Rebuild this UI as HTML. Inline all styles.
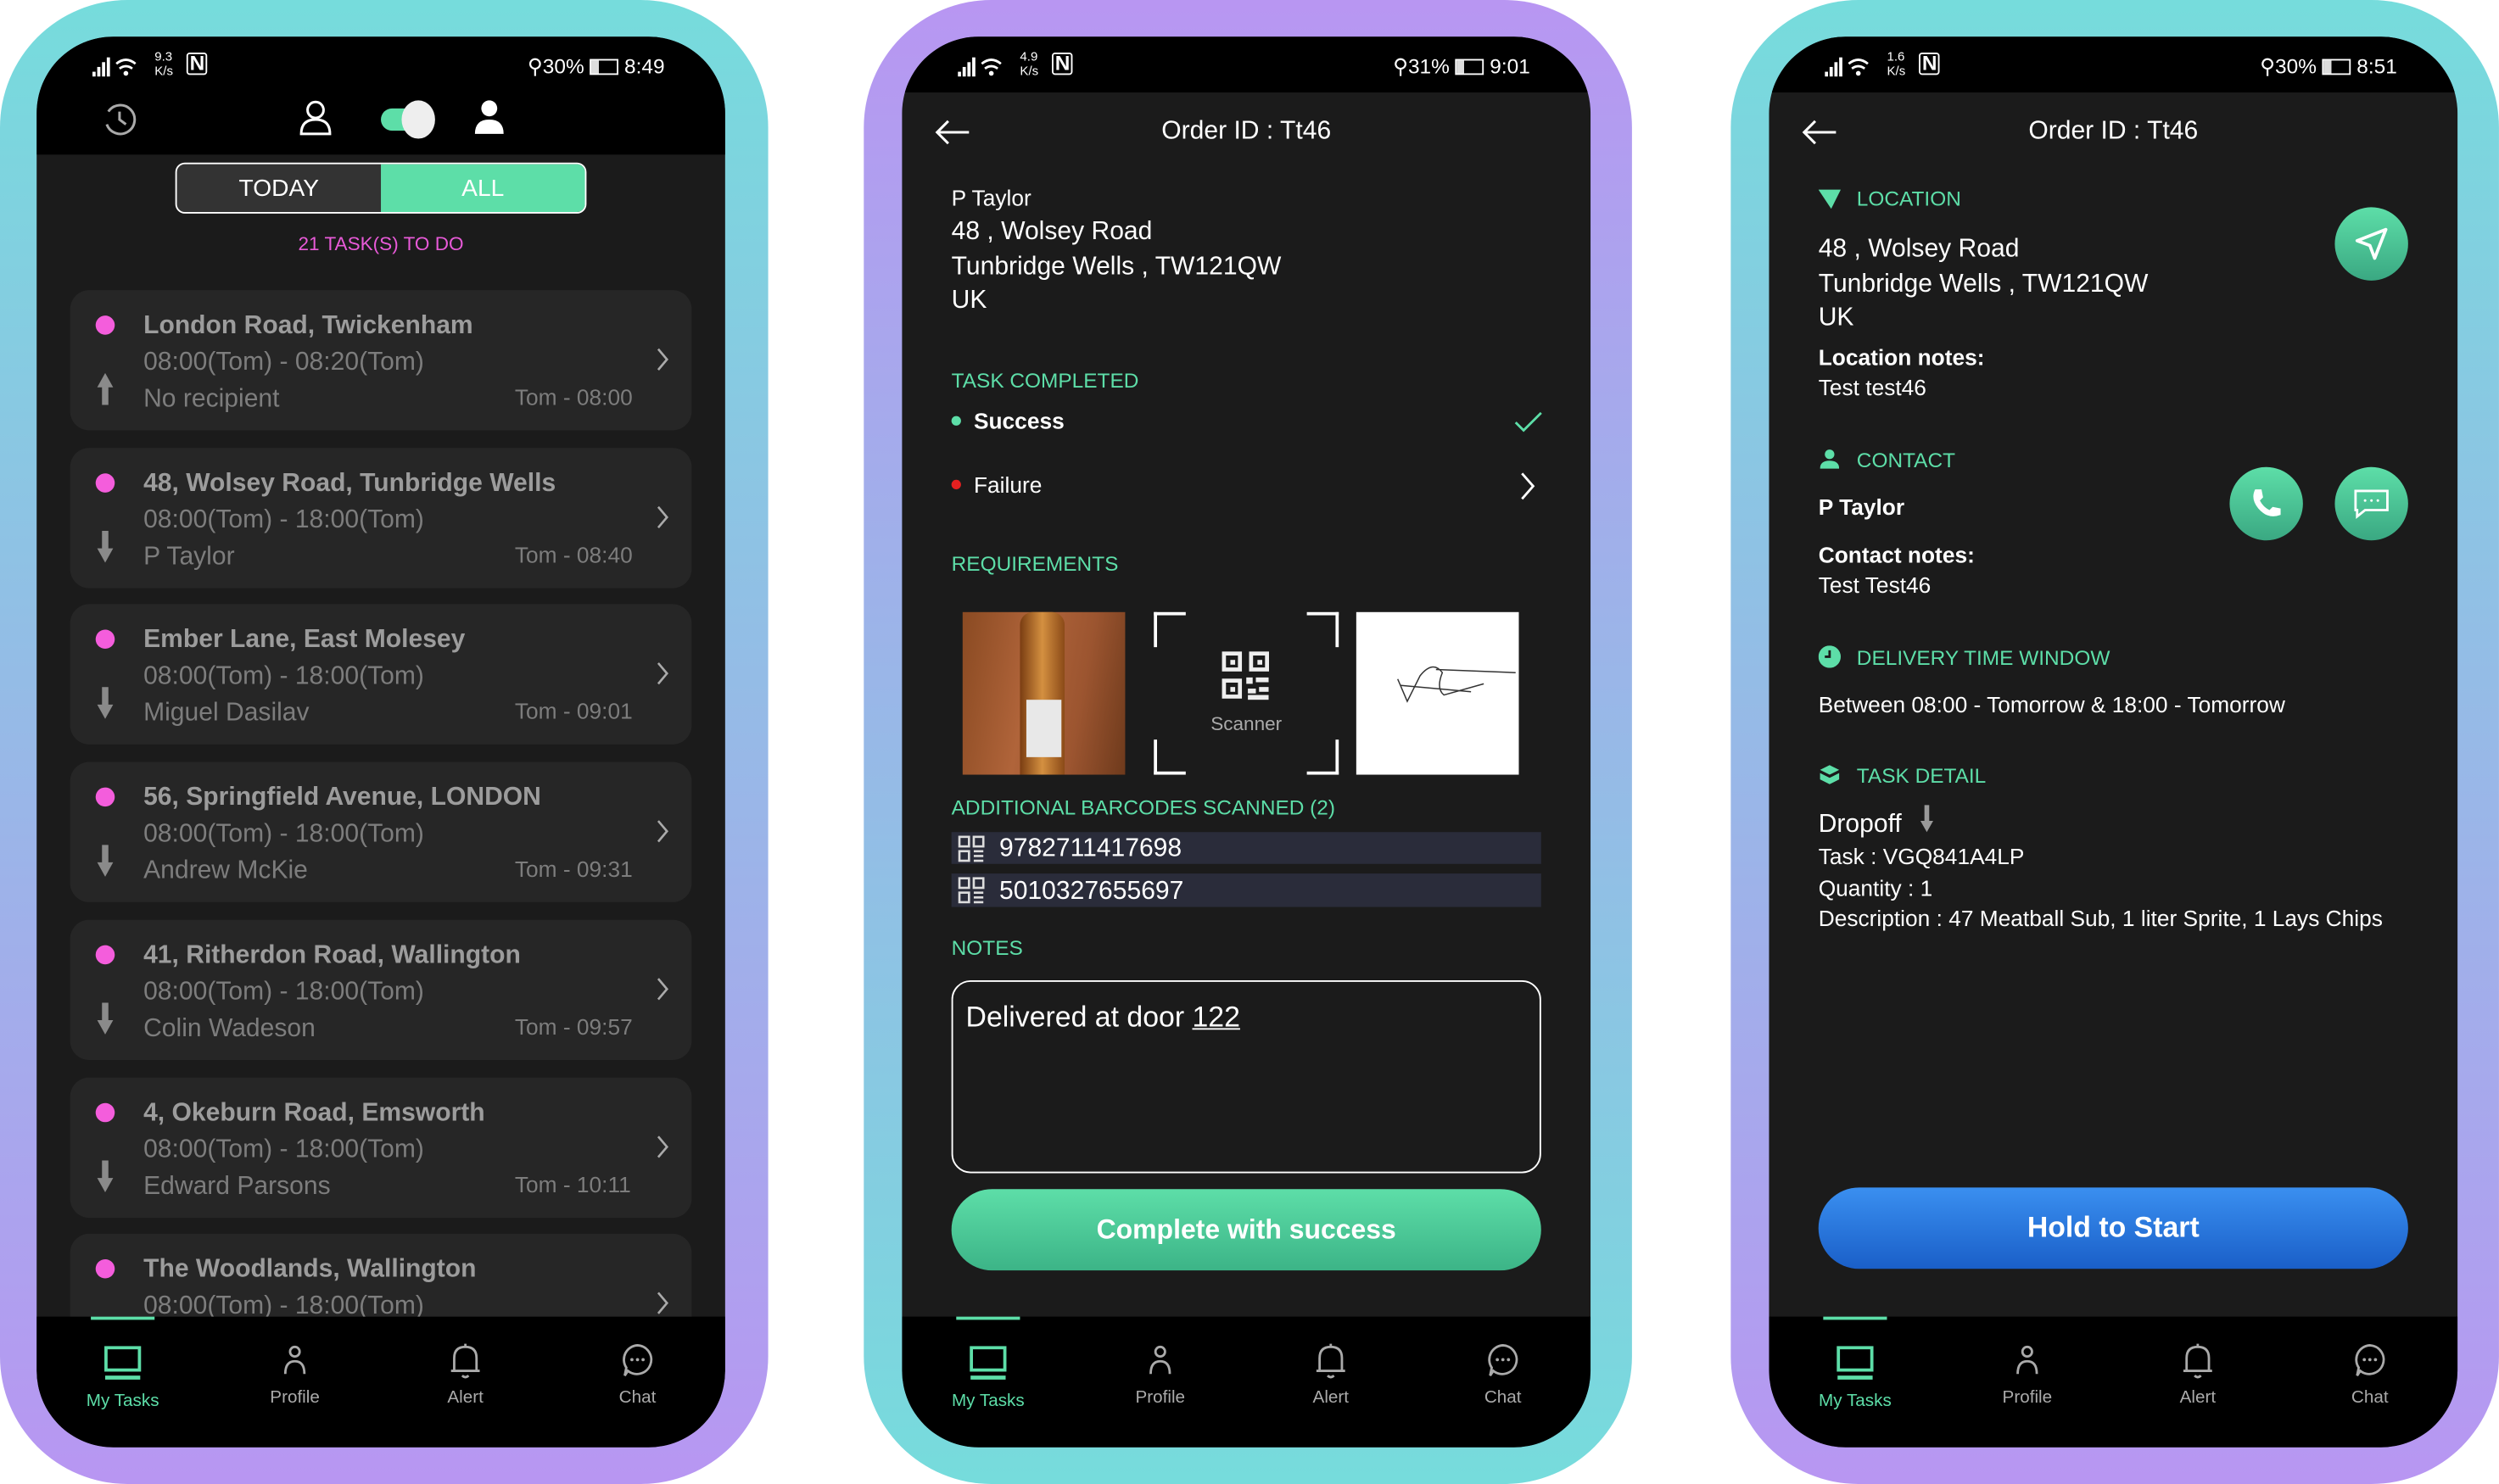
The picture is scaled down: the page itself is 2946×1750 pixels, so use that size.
<!DOCTYPE html>
<html><head><meta charset="utf-8">
<style>
*{margin:0;padding:0;box-sizing:border-box}
html,body{width:2946px;height:1750px;overflow:hidden;background:#fff;font-family:"Liberation Sans",sans-serif}
#w{position:absolute;left:0;top:0;width:1568px;height:931px;transform:scale(1.8788,1.8797);transform-origin:0 0}
.a{position:absolute}
.frame{position:absolute;top:0;width:482px;height:931px;border-radius:80px}
.scr{position:absolute;top:23px;width:432px;height:885px;border-radius:48px;background:#1b1b1b;overflow:hidden}
.sb{position:absolute;left:0;top:0;width:432px;height:35px;background:#000}
.t{position:absolute;white-space:nowrap;line-height:1.2}
.g{color:#5ddea8}
.w{color:#fff}
.card{position:absolute;left:21px;width:390px;height:88px;background:#262626;border-radius:12px}
.card .t{margin-top:1px}
.dot{position:absolute;width:12px;height:12px;border-radius:50%;background:#f45ddc}
.nav{position:absolute;left:0;top:803px;width:432px;height:82px;background:#000;border-radius:0 0 48px 48px}
.nl{position:absolute;font-size:11px;color:#aaa;width:80px;text-align:center;top:45px}
.nl.g{color:#5ddea8;top:47px}
.circ{position:absolute;width:46px;height:46px;border-radius:50%;background:linear-gradient(#5ddea8,#3aa882)}
.chev{position:absolute;left:368px;top:36px}
</style></head><body><div id="w">

<div class="frame" style="left:0;background:linear-gradient(#76dcdc,#b896f2)"></div>
<div class="frame" style="left:542px;background:linear-gradient(#b896f2,#76dcdc)"></div>
<div class="frame" style="left:1086px;background:linear-gradient(#76dcdc,#b896f2)"></div>

<!-- ============ PHONE 1 ============ -->
<div class="scr" style="left:23px">
 <div class="sb" style="height:74px"></div>
 <svg class="a" style="left:35px;top:12px" width="60" height="14"><g fill="#fff"><rect x="0" y="10" width="2" height="3"/><rect x="3" y="7" width="2" height="6"/><rect x="6" y="4" width="2" height="9"/><rect x="9" y="1" width="2" height="12"/></g><path d="M15 5 Q21 0 27 5 M17 8 Q21 5 25 8" stroke="#fff" stroke-width="1.5" fill="none"/><circle cx="21" cy="11" r="1.5" fill="#fff"/></svg>
 <div class="t w" style="left:74px;top:8px;font-size:8px;line-height:9px">9.3<br>K/s</div>
 <div class="t w" style="left:94px;top:10px;font-size:13px;font-weight:bold;border:1.5px solid #fff;border-radius:2px;padding:0 1px;line-height:12px">N</div>
 <div class="t w" style="left:308px;top:11px;font-size:13px">⚲30% <span style="display:inline-block;width:18px;height:10px;border:1px solid #fff;vertical-align:-1px;background:linear-gradient(90deg,#ddd 30%,transparent 30%)"></span> 8:49</div>
 <svg class="a" style="left:40px;top:40px" width="24" height="24"><path d="M5 7 A9 9 0 1 1 4 15" stroke="#aaa" stroke-width="1.6" fill="none"/><path d="M12 7 V12 L16 15" stroke="#aaa" stroke-width="1.6" fill="none"/></svg>
 <svg class="a" style="left:164px;top:39px" width="22" height="24"><circle cx="11" cy="7" r="5" stroke="#fff" stroke-width="1.6" fill="none"/><path d="M2 22 Q2 13 11 13 Q20 13 20 22 Z" stroke="#fff" stroke-width="1.6" fill="none"/></svg>
 <div class="a" style="left:216px;top:45px;width:28px;height:14px;border-radius:7px;background:#5ddea8"></div>
 <div class="a" style="left:229px;top:40px;width:21px;height:24px;border-radius:50%;background:#eee"></div>
 <svg class="a" style="left:273px;top:39px" width="22" height="24"><circle cx="11" cy="6" r="5" fill="#fff"/><path d="M2 22 Q2 13 11 13 Q20 13 20 22 Z" fill="#fff"/></svg>
 <div class="a" style="left:87px;top:79px;width:258px;height:32px;border:1.5px solid #fff;border-radius:6px;overflow:hidden;background:#333">
  <div class="a" style="left:128px;top:0;width:130px;height:30px;background:#5ddea8"></div>
  <div class="t w" style="left:0;top:7px;width:128px;text-align:center;font-size:15px">TODAY</div>
  <div class="t w" style="left:128px;top:7px;width:128px;text-align:center;font-size:15px">ALL</div>
 </div>
 <div class="t" style="left:0;width:432px;text-align:center;top:123px;font-size:12px;color:#e85ad8">21 TASK(S) TO DO</div>

 <div class="card" style="top:159px"><div class="dot" style="left:16px;top:16px"></div>
  <div class="t" style="left:46px;top:12px;font-size:16px;font-weight:bold;color:#9c9c9c">London Road, Twickenham</div>
  <div class="t" style="left:46px;top:35px;font-size:16px;color:#7d7d7d">08:00(Tom) - 08:20(Tom)</div>
  <div class="t" style="left:46px;top:58px;font-size:16px;color:#7d7d7d">No recipient</div>
  <div class="t" style="left:279px;top:58px;font-size:14px;color:#7d7d7d">Tom - 08:00</div>
  <svg class="chev" width="8" height="15"><path d="M1 1 L6.5 7.5 L1 14" stroke="#aaa" stroke-width="1.4" fill="none"/></svg>
  <svg class="a" style="left:16px;top:52px" width="12" height="22"><path d="M6 0 L11 9 H8 V20 H4 V9 H1 Z" fill="#8a8a8a"/></svg></div>
 <div class="card" style="top:258px"><div class="dot" style="left:16px;top:16px"></div>
  <div class="t" style="left:46px;top:12px;font-size:16px;font-weight:bold;color:#9c9c9c">48, Wolsey Road, Tunbridge Wells</div>
  <div class="t" style="left:46px;top:35px;font-size:16px;color:#7d7d7d">08:00(Tom) - 18:00(Tom)</div>
  <div class="t" style="left:46px;top:58px;font-size:16px;color:#7d7d7d">P Taylor</div>
  <div class="t" style="left:279px;top:58px;font-size:14px;color:#7d7d7d">Tom - 08:40</div>
  <svg class="chev" width="8" height="15"><path d="M1 1 L6.5 7.5 L1 14" stroke="#aaa" stroke-width="1.4" fill="none"/></svg>
  <svg class="a" style="left:16px;top:52px" width="12" height="22"><path d="M6 20 L11 11 H8 V0 H4 V11 H1 Z" fill="#8a8a8a"/></svg></div>
 <div class="card" style="top:356px"><div class="dot" style="left:16px;top:16px"></div>
  <div class="t" style="left:46px;top:12px;font-size:16px;font-weight:bold;color:#9c9c9c">Ember Lane, East Molesey</div>
  <div class="t" style="left:46px;top:35px;font-size:16px;color:#7d7d7d">08:00(Tom) - 18:00(Tom)</div>
  <div class="t" style="left:46px;top:58px;font-size:16px;color:#7d7d7d">Miguel Dasilav</div>
  <div class="t" style="left:279px;top:58px;font-size:14px;color:#7d7d7d">Tom - 09:01</div>
  <svg class="chev" width="8" height="15"><path d="M1 1 L6.5 7.5 L1 14" stroke="#aaa" stroke-width="1.4" fill="none"/></svg>
  <svg class="a" style="left:16px;top:52px" width="12" height="22"><path d="M6 20 L11 11 H8 V0 H4 V11 H1 Z" fill="#8a8a8a"/></svg></div>
 <div class="card" style="top:455px"><div class="dot" style="left:16px;top:16px"></div>
  <div class="t" style="left:46px;top:12px;font-size:16px;font-weight:bold;color:#9c9c9c">56, Springfield Avenue, LONDON</div>
  <div class="t" style="left:46px;top:35px;font-size:16px;color:#7d7d7d">08:00(Tom) - 18:00(Tom)</div>
  <div class="t" style="left:46px;top:58px;font-size:16px;color:#7d7d7d">Andrew McKie</div>
  <div class="t" style="left:279px;top:58px;font-size:14px;color:#7d7d7d">Tom - 09:31</div>
  <svg class="chev" width="8" height="15"><path d="M1 1 L6.5 7.5 L1 14" stroke="#aaa" stroke-width="1.4" fill="none"/></svg>
  <svg class="a" style="left:16px;top:52px" width="12" height="22"><path d="M6 20 L11 11 H8 V0 H4 V11 H1 Z" fill="#8a8a8a"/></svg></div>
 <div class="card" style="top:554px"><div class="dot" style="left:16px;top:16px"></div>
  <div class="t" style="left:46px;top:12px;font-size:16px;font-weight:bold;color:#9c9c9c">41, Ritherdon Road, Wallington</div>
  <div class="t" style="left:46px;top:35px;font-size:16px;color:#7d7d7d">08:00(Tom) - 18:00(Tom)</div>
  <div class="t" style="left:46px;top:58px;font-size:16px;color:#7d7d7d">Colin Wadeson</div>
  <div class="t" style="left:279px;top:58px;font-size:14px;color:#7d7d7d">Tom - 09:57</div>
  <svg class="chev" width="8" height="15"><path d="M1 1 L6.5 7.5 L1 14" stroke="#aaa" stroke-width="1.4" fill="none"/></svg>
  <svg class="a" style="left:16px;top:52px" width="12" height="22"><path d="M6 20 L11 11 H8 V0 H4 V11 H1 Z" fill="#8a8a8a"/></svg></div>
 <div class="card" style="top:653px"><div class="dot" style="left:16px;top:16px"></div>
  <div class="t" style="left:46px;top:12px;font-size:16px;font-weight:bold;color:#9c9c9c">4, Okeburn Road, Emsworth</div>
  <div class="t" style="left:46px;top:35px;font-size:16px;color:#7d7d7d">08:00(Tom) - 18:00(Tom)</div>
  <div class="t" style="left:46px;top:58px;font-size:16px;color:#7d7d7d">Edward Parsons</div>
  <div class="t" style="left:279px;top:58px;font-size:14px;color:#7d7d7d">Tom - 10:11</div>
  <svg class="chev" width="8" height="15"><path d="M1 1 L6.5 7.5 L1 14" stroke="#aaa" stroke-width="1.4" fill="none"/></svg>
  <svg class="a" style="left:16px;top:52px" width="12" height="22"><path d="M6 20 L11 11 H8 V0 H4 V11 H1 Z" fill="#8a8a8a"/></svg></div>
 <div class="card" style="top:751px"><div class="dot" style="left:16px;top:16px"></div>
  <div class="t" style="left:46px;top:12px;font-size:16px;font-weight:bold;color:#9c9c9c">The Woodlands, Wallington</div>
  <div class="t" style="left:46px;top:35px;font-size:16px;color:#7d7d7d">08:00(Tom) - 18:00(Tom)</div>
  <svg class="chev" width="8" height="15"><path d="M1 1 L6.5 7.5 L1 14" stroke="#aaa" stroke-width="1.4" fill="none"/></svg></div>
 <div class="nav">
  <div class="a" style="left:34px;top:0;width:40px;height:2px;background:#5ddea8"></div>
  <svg class="a" style="left:42px;top:18px" width="24" height="22"><rect x="1.5" y="1.5" width="21" height="14" stroke="#5ddea8" stroke-width="2" fill="none"/><rect x="1" y="19" width="22" height="2.5" fill="#5ddea8"/></svg>
  <div class="nl g" style="left:14px">My Tasks</div>
  <svg class="a" style="left:153px;top:18px" width="18" height="20"><circle cx="9" cy="4" r="3" stroke="#aaa" stroke-width="1.5" fill="none"/><path d="M3 18 Q3 10 9 10 Q15 10 15 18" stroke="#aaa" stroke-width="1.5" fill="none"/></svg>
  <div class="nl" style="left:122px">Profile</div>
  <svg class="a" style="left:258px;top:16px" width="22" height="24"><path d="M4 18 V10 Q4 3 11 3 Q18 3 18 10 V18 Z M2 18 H20 M9 21 Q11 23 13 21 M11 1 V3" stroke="#aaa" stroke-width="1.5" fill="none"/></svg>
  <div class="nl" style="left:229px">Alert</div>
  <svg class="a" style="left:366px;top:16px" width="22" height="24"><path d="M11 2 A9 9 0 1 1 5 18 L3 21 L4 16 A9 9 0 0 1 11 2 Z" stroke="#aaa" stroke-width="1.5" fill="none"/><circle cx="7.5" cy="11" r="1" fill="#aaa"/><circle cx="11" cy="11" r="1" fill="#aaa"/><circle cx="14.5" cy="11" r="1" fill="#aaa"/></svg>
  <div class="nl" style="left:337px">Chat</div>
 </div>
</div>

<!-- ============ PHONE 2 ============ -->
<div class="scr" style="left:566px">
 <div class="sb"></div>
 <svg class="a" style="left:35px;top:12px" width="60" height="14"><g fill="#fff"><rect x="0" y="10" width="2" height="3"/><rect x="3" y="7" width="2" height="6"/><rect x="6" y="4" width="2" height="9"/><rect x="9" y="1" width="2" height="12"/></g><path d="M15 5 Q21 0 27 5 M17 8 Q21 5 25 8" stroke="#fff" stroke-width="1.5" fill="none"/><circle cx="21" cy="11" r="1.5" fill="#fff"/></svg>
 <div class="t w" style="left:74px;top:8px;font-size:8px;line-height:9px">4.9<br>K/s</div>
 <div class="t w" style="left:94px;top:10px;font-size:13px;font-weight:bold;border:1.5px solid #fff;border-radius:2px;padding:0 1px;line-height:12px">N</div>
 <div class="t w" style="left:308px;top:11px;font-size:13px">⚲31% <span style="display:inline-block;width:18px;height:10px;border:1px solid #fff;vertical-align:-1px;background:linear-gradient(90deg,#ddd 30%,transparent 30%)"></span> 9:01</div>
 <svg class="a" style="left:20px;top:52px" width="24" height="16"><path d="M22 8 H2 M9 1 L2 8 L9 15" stroke="#fff" stroke-width="1.6" fill="none"/></svg>
 <div class="t w" style="left:0;width:432px;text-align:center;top:50px;font-size:16px">Order ID : Tt46</div>
 <div class="t w" style="left:31px;top:93px;font-size:14px">P Taylor</div>
 <div class="t w" style="left:31px;top:112px;font-size:16px;line-height:21.5px">48 , Wolsey Road<br>Tunbridge Wells , TW121QW<br>UK</div>
 <div class="t g" style="left:31px;top:208px;font-size:13px">TASK COMPLETED</div>
 <div class="a" style="left:31px;top:238px;width:6px;height:6px;border-radius:50%;background:#5ddea8"></div>
 <div class="t w" style="left:45px;top:233px;font-size:14px;font-weight:bold">Success</div>
 <svg class="a" style="left:384px;top:235px" width="18" height="14"><path d="M1 7 L6 12 L17 1" stroke="#5ddea8" stroke-width="1.5" fill="none"/></svg>
 <div class="a" style="left:31px;top:278px;width:6px;height:6px;border-radius:50%;background:#e52020"></div>
 <div class="t w" style="left:45px;top:273px;font-size:14px">Failure</div>
 <svg class="a" style="left:388px;top:273px" width="10" height="18"><path d="M1 1 L8 9 L1 17" stroke="#fff" stroke-width="1.5" fill="none"/></svg>
 <div class="t g" style="left:31px;top:323px;font-size:13px">REQUIREMENTS</div>
 <div class="a" style="left:38px;top:361px;width:102px;height:102px;background:linear-gradient(100deg,#8a4a22,#b0643a 40%,#9c5530 70%,#6e3a1c)"></div>
 <div class="a" style="left:74px;top:361px;width:28px;height:102px;border-radius:8px 8px 0 0;background:linear-gradient(90deg,#7a3d12,#d49040 50%,#8b4a18)"></div>
 <div class="a" style="left:78px;top:416px;width:22px;height:36px;background:#e8e8e8"></div>
 <div class="a" style="left:158px;top:361px;width:116px;height:102px">
  <div class="a" style="left:0;top:0;width:20px;height:22px;border-left:2px solid #fff;border-top:2px solid #fff"></div>
  <div class="a" style="right:0;top:0;width:20px;height:22px;border-right:2px solid #fff;border-top:2px solid #fff"></div>
  <div class="a" style="left:0;bottom:0;width:20px;height:22px;border-left:2px solid #fff;border-bottom:2px solid #fff"></div>
  <div class="a" style="right:0;bottom:0;width:20px;height:22px;border-right:2px solid #fff;border-bottom:2px solid #fff"></div>
  <svg class="a" style="left:42px;top:24px" width="32" height="32"><g fill="none" stroke="#eee" stroke-width="2.5"><rect x="2" y="2" width="10" height="10"/><rect x="19" y="2" width="10" height="10"/><rect x="2" y="19" width="10" height="10"/></g><g fill="#eee"><rect x="6" y="6" width="3" height="3"/><rect x="23" y="6" width="3" height="3"/><rect x="6" y="23" width="3" height="3"/><rect x="16" y="17" width="4" height="4"/><rect x="22" y="17" width="8" height="3"/><rect x="17" y="24" width="5" height="3"/><rect x="24" y="23" width="6" height="3"/><rect x="17" y="28" width="13" height="3"/></g></svg>
  <div class="t" style="left:0;width:116px;text-align:center;top:63px;font-size:12px;color:#aaa">Scanner</div>
 </div>
 <div class="a" style="left:285px;top:361px;width:102px;height:102px;background:#fff">
  <svg width="102" height="102"><path d="M26 42 L32 56 L40 40 Q48 30 54 38 Q50 48 55 52 L80 45 M28 46 L72 50 M50 36 L100 38" stroke="#333" stroke-width="0.8" fill="none"/></svg>
 </div>
 <div class="t g" style="left:31px;top:476px;font-size:13px">ADDITIONAL BARCODES SCANNED (2)</div>
 <div class="a" style="left:31px;top:499px;width:370px;height:20px;background:#2a2c3a"></div>
 <div class="a" style="left:31px;top:525px;width:370px;height:21px;background:#2a2c3a"></div>
 <svg class="a" style="left:35px;top:501px" width="17" height="17"><g fill="none" stroke="#ddd" stroke-width="1.4"><rect x="1" y="1" width="6" height="6"/><rect x="10" y="1" width="6" height="6"/><rect x="1" y="10" width="6" height="6"/><path d="M10 10 H16 M10 13 H16 M10 16 H16"/></g></svg>
 <svg class="a" style="left:35px;top:527px" width="17" height="17"><g fill="none" stroke="#ddd" stroke-width="1.4"><rect x="1" y="1" width="6" height="6"/><rect x="10" y="1" width="6" height="6"/><rect x="1" y="10" width="6" height="6"/><path d="M10 10 H16 M10 13 H16 M10 16 H16"/></g></svg>
 <div class="t w" style="left:61px;top:500px;font-size:16px">9782711417698</div>
 <div class="t w" style="left:61px;top:527px;font-size:16px">5010327655697</div>
 <div class="t g" style="left:31px;top:564px;font-size:13px">NOTES</div>
 <div class="a" style="left:31px;top:592px;width:370px;height:121px;border:1.3px solid #fff;border-radius:12px"></div>
 <div class="t w" style="left:40px;top:605px;font-size:18px">Delivered at door <u>122</u></div>
 <div class="a" style="left:31px;top:723px;width:370px;height:51px;border-radius:26px;background:linear-gradient(#5ddea8,#3cb487)"></div>
 <div class="t w" style="left:31px;width:370px;text-align:center;top:739px;font-size:17px;font-weight:bold">Complete with success</div>
 <div class="nav">
  <div class="a" style="left:34px;top:0;width:40px;height:2px;background:#5ddea8"></div>
  <svg class="a" style="left:42px;top:18px" width="24" height="22"><rect x="1.5" y="1.5" width="21" height="14" stroke="#5ddea8" stroke-width="2" fill="none"/><rect x="1" y="19" width="22" height="2.5" fill="#5ddea8"/></svg>
  <div class="nl g" style="left:14px">My Tasks</div>
  <svg class="a" style="left:153px;top:18px" width="18" height="20"><circle cx="9" cy="4" r="3" stroke="#aaa" stroke-width="1.5" fill="none"/><path d="M3 18 Q3 10 9 10 Q15 10 15 18" stroke="#aaa" stroke-width="1.5" fill="none"/></svg>
  <div class="nl" style="left:122px">Profile</div>
  <svg class="a" style="left:258px;top:16px" width="22" height="24"><path d="M4 18 V10 Q4 3 11 3 Q18 3 18 10 V18 Z M2 18 H20 M9 21 Q11 23 13 21 M11 1 V3" stroke="#aaa" stroke-width="1.5" fill="none"/></svg>
  <div class="nl" style="left:229px">Alert</div>
  <svg class="a" style="left:366px;top:16px" width="22" height="24"><path d="M11 2 A9 9 0 1 1 5 18 L3 21 L4 16 A9 9 0 0 1 11 2 Z" stroke="#aaa" stroke-width="1.5" fill="none"/><circle cx="7.5" cy="11" r="1" fill="#aaa"/><circle cx="11" cy="11" r="1" fill="#aaa"/><circle cx="14.5" cy="11" r="1" fill="#aaa"/></svg>
  <div class="nl" style="left:337px">Chat</div>
 </div>
</div>

<!-- ============ PHONE 3 ============ -->
<div class="scr" style="left:1110px">
 <div class="sb"></div>
 <svg class="a" style="left:35px;top:12px" width="60" height="14"><g fill="#fff"><rect x="0" y="10" width="2" height="3"/><rect x="3" y="7" width="2" height="6"/><rect x="6" y="4" width="2" height="9"/><rect x="9" y="1" width="2" height="12"/></g><path d="M15 5 Q21 0 27 5 M17 8 Q21 5 25 8" stroke="#fff" stroke-width="1.5" fill="none"/><circle cx="21" cy="11" r="1.5" fill="#fff"/></svg>
 <div class="t w" style="left:74px;top:8px;font-size:8px;line-height:9px">1.6<br>K/s</div>
 <div class="t w" style="left:94px;top:10px;font-size:13px;font-weight:bold;border:1.5px solid #fff;border-radius:2px;padding:0 1px;line-height:12px">N</div>
 <div class="t w" style="left:308px;top:11px;font-size:13px">⚲30% <span style="display:inline-block;width:18px;height:10px;border:1px solid #fff;vertical-align:-1px;background:linear-gradient(90deg,#ddd 30%,transparent 30%)"></span> 8:51</div>
 <svg class="a" style="left:20px;top:52px" width="24" height="16"><path d="M22 8 H2 M9 1 L2 8 L9 15" stroke="#fff" stroke-width="1.6" fill="none"/></svg>
 <div class="t w" style="left:0;width:432px;text-align:center;top:50px;font-size:16px">Order ID : Tt46</div>
 <svg class="a" style="left:31px;top:95px" width="14" height="14"><path d="M0 1 L14 1 L8 13 Z" fill="#5ddea8"/></svg>
 <div class="t g" style="left:55px;top:94px;font-size:13px">LOCATION</div>
 <div class="t w" style="left:31px;top:123px;font-size:16px;line-height:21.5px">48 , Wolsey Road<br>Tunbridge Wells , TW121QW<br>UK</div>
 <div class="t w" style="left:31px;top:193px;font-size:14px;font-weight:bold">Location notes:</div>
 <div class="t w" style="left:31px;top:212px;font-size:14px">Test test46</div>
 <div class="circ" style="left:355px;top:107px"></div>
 <svg class="a" style="left:367px;top:119px" width="22" height="22"><path d="M20 2 L2 9 L10 12 L13 20 Z" stroke="#fff" stroke-width="2" fill="none" stroke-linejoin="round"/></svg>
 <svg class="a" style="left:32px;top:258px" width="12" height="14"><circle cx="6" cy="4" r="3" fill="#5ddea8"/><path d="M0 13 Q0 8 6 8 Q12 8 12 13 Z" fill="#5ddea8"/></svg>
 <div class="t g" style="left:55px;top:258px;font-size:13px">CONTACT</div>
 <div class="t w" style="left:31px;top:287px;font-size:14px;font-weight:bold">P Taylor</div>
 <div class="t w" style="left:31px;top:317px;font-size:14px;font-weight:bold">Contact notes:</div>
 <div class="t w" style="left:31px;top:336px;font-size:14px">Test Test46</div>
 <div class="circ" style="left:289px;top:270px"></div>
 <svg class="a" style="left:301px;top:282px" width="22" height="22"><path d="M4 2 L8 2 L9 7 L7 9 Q9 13 13 15 L15 13 L20 14 L20 18 Q12 21 6 14 Q1 8 4 2 Z" fill="#fff"/></svg>
 <div class="circ" style="left:355px;top:270px"></div>
 <svg class="a" style="left:366px;top:283px" width="24" height="20"><path d="M2 2 H22 V14 H8 L3 18 V14 H2 Z" stroke="#fff" stroke-width="1.5" fill="none"/><circle cx="8" cy="8" r="0.8" fill="#fff"/><circle cx="12" cy="8" r="0.8" fill="#fff"/><circle cx="16" cy="8" r="0.8" fill="#fff"/></svg>
 <svg class="a" style="left:31px;top:382px" width="14" height="14"><circle cx="7" cy="7" r="7" fill="#5ddea8"/><path d="M7 3 V7 H4" stroke="#1b1b1b" stroke-width="1.5" fill="none"/></svg>
 <div class="t g" style="left:55px;top:382px;font-size:13px">DELIVERY TIME WINDOW</div>
 <div class="t w" style="left:31px;top:411px;font-size:14px">Between 08:00 - Tomorrow &amp; 18:00 - Tomorrow</div>
 <svg class="a" style="left:31px;top:456px" width="14" height="14"><path d="M7 1 L13 4 L7 7 L1 4 Z M1 6 L7 9 L13 6 V10 L7 13 L1 10 Z" fill="#5ddea8"/></svg>
 <div class="t g" style="left:55px;top:456px;font-size:13px">TASK DETAIL</div>
 <div class="t w" style="left:31px;top:485px;font-size:16px">Dropoff</div>
 <svg class="a" style="left:94px;top:482px" width="10" height="18"><path d="M5 17 L9 10 H6.5 V0 H3.5 V10 H1 Z" fill="#999"/></svg>
 <div class="t w" style="left:31px;top:506px;font-size:14px">Task : VGQ841A4LP</div>
 <div class="t w" style="left:31px;top:526px;font-size:14px">Quantity : 1</div>
 <div class="t w" style="left:31px;top:545px;font-size:14px">Description : 47 Meatball Sub, 1 liter Sprite, 1 Lays Chips</div>
 <div class="a" style="left:31px;top:722px;width:370px;height:51px;border-radius:26px;background:linear-gradient(#3a8ff0,#1a5fc8)"></div>
 <div class="t w" style="left:31px;width:370px;text-align:center;top:737px;font-size:18px;font-weight:bold">Hold to Start</div>
 <div class="nav">
  <div class="a" style="left:34px;top:0;width:40px;height:2px;background:#5ddea8"></div>
  <svg class="a" style="left:42px;top:18px" width="24" height="22"><rect x="1.5" y="1.5" width="21" height="14" stroke="#5ddea8" stroke-width="2" fill="none"/><rect x="1" y="19" width="22" height="2.5" fill="#5ddea8"/></svg>
  <div class="nl g" style="left:14px">My Tasks</div>
  <svg class="a" style="left:153px;top:18px" width="18" height="20"><circle cx="9" cy="4" r="3" stroke="#aaa" stroke-width="1.5" fill="none"/><path d="M3 18 Q3 10 9 10 Q15 10 15 18" stroke="#aaa" stroke-width="1.5" fill="none"/></svg>
  <div class="nl" style="left:122px">Profile</div>
  <svg class="a" style="left:258px;top:16px" width="22" height="24"><path d="M4 18 V10 Q4 3 11 3 Q18 3 18 10 V18 Z M2 18 H20 M9 21 Q11 23 13 21 M11 1 V3" stroke="#aaa" stroke-width="1.5" fill="none"/></svg>
  <div class="nl" style="left:229px">Alert</div>
  <svg class="a" style="left:366px;top:16px" width="22" height="24"><path d="M11 2 A9 9 0 1 1 5 18 L3 21 L4 16 A9 9 0 0 1 11 2 Z" stroke="#aaa" stroke-width="1.5" fill="none"/><circle cx="7.5" cy="11" r="1" fill="#aaa"/><circle cx="11" cy="11" r="1" fill="#aaa"/><circle cx="14.5" cy="11" r="1" fill="#aaa"/></svg>
  <div class="nl" style="left:337px">Chat</div>
 </div>
</div>

</div></body></html>
